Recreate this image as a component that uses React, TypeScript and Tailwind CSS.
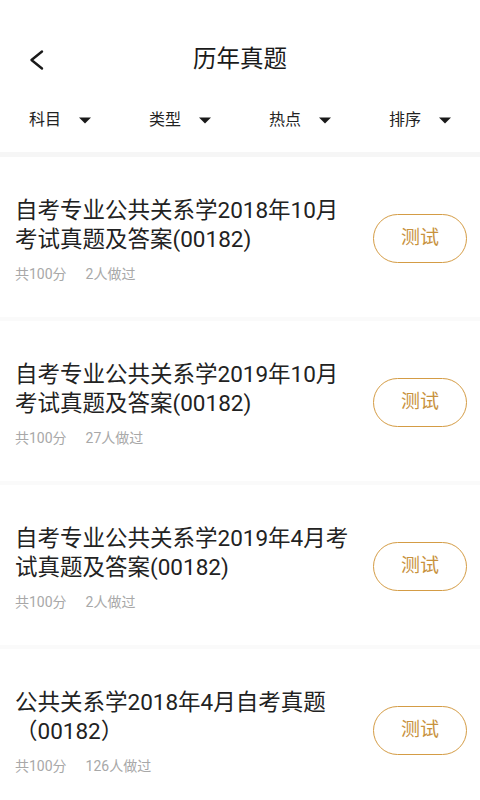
const exams = [
  { lines: ['自考专业公共关系学2018年10月', '考试真题及答案(00182)'], score: 100, count: 2 },
  { lines: ['自考专业公共关系学2019年10月', '考试真题及答案(00182)'], score: 100, count: 27 },
  { lines: ['自考专业公共关系学2019年4月考', '试真题及答案(00182)'], score: 100, count: 2 },
  { lines: ['公共关系学2018年4月自考真题', '（00182）'], score: 100, count: 126 },
];

const filters = ['科目', '类型', '热点', '排序'];

const BackIcon = () => (
  <svg width="16" height="22" viewBox="0 0 16 22" fill="none">
    <polyline points="13,2.5 2.5,11 13,19.5" stroke="#1a1a1a" strokeWidth="2.4" strokeLinecap="round" strokeLinejoin="round" />
  </svg>
);

const Caret = () => (
  <svg width="12" height="7" viewBox="0 0 12 7">
    <polygon points="0,0.5 12,0.5 6,6.5" fill="#1a1a1a" />
  </svg>
);

const ExamCard = ({ lines, score, count }: { lines: string[]; score: number; count: number }) => (
  <div className="flex items-center h-[160px] bg-white pl-[15px] pr-[13px]">
    <div className="flex-1 min-w-0 pt-[5px]">
      <div className="text-[22.5px] leading-[29px] text-[#222222]">
        {lines.map((l, i) => (
          <div key={i} className="whitespace-nowrap">{l}</div>
        ))}
      </div>
      <div className="flex mt-[10px] text-[14px] leading-[20px] text-[#a8a8a8]">
        <span>共{score}分</span>
        <span className="ml-[19px]">{count}人做过</span>
      </div>
    </div>
    <button className="w-[94px] h-[49px] mt-[3px] shrink-0 rounded-full border-[1.5px] border-[#d49c45] text-[19px] text-[#c8923d] bg-white">
      测试
    </button>
  </div>
);

export default function App() {
  return (
    <div
      className="w-[480px] h-[800px] overflow-hidden bg-white"
      style={{ fontFamily: "Roboto, 'Noto Sans CJK SC', sans-serif" }}
    >
      <div className="h-[88px] pt-[32px] flex items-center">
        <div className="w-[80px] pl-[29px] flex items-center">
          <BackIcon />
        </div>
        <div className="flex-1 text-center text-[23.5px] text-[#1a1a1a]">历年真题</div>
        <div className="w-[80px]" />
      </div>

      <div className="h-[64px] grid grid-cols-4">
        {filters.map((f) => (
          <div key={f} className="flex items-center justify-center gap-[18px]">
            <span className="text-[16px] text-[#222222]">{f}</span>
            <Caret />
          </div>
        ))}
      </div>

      <div className="h-[5px] bg-[#f6f6f6]" />

      <div className="flex flex-col">
        {exams.map((e, i) => (
          <div key={i}>
            <ExamCard {...e} />
            <div className="h-[4px] bg-[#fafafa]" />
          </div>
        ))}
      </div>
    </div>
  );
}
